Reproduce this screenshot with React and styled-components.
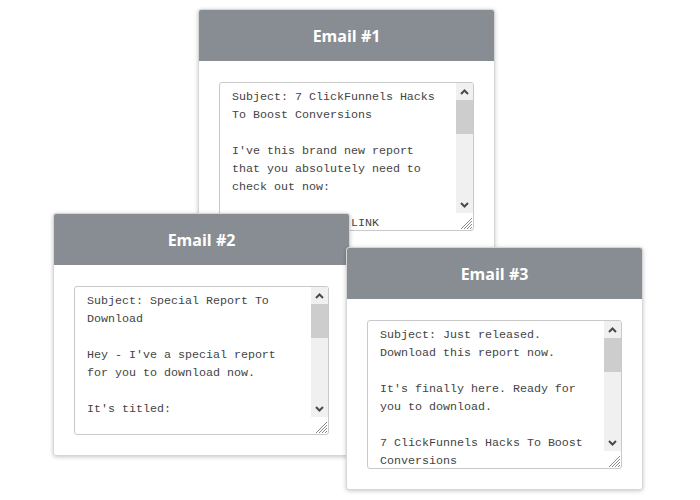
import React from "react";
import styled, { createGlobalStyle } from "styled-components";

const GlobalStyle = createGlobalStyle`
  html, body { margin: 0; padding: 0; background: #ffffff; }
  body { font-family: "Open Sans", "Liberation Sans", sans-serif; }
`;

const Canvas = styled.div`
  position: relative;
  width: 700px;
  height: 500px;
  overflow: hidden;
  background: #ffffff;
`;

const Card = styled.section`
  position: absolute;
  left: ${(p) => p.$x}px;
  top: ${(p) => p.$y}px;
  width: 297px;
  box-sizing: border-box;
  background: #ffffff;
  border: 1px solid #d6d6d6;
  border-radius: 3px;
  box-shadow: 0 1px 4px rgba(0, 0, 0, 0.22);
  overflow: hidden;
  display: flex;
  flex-direction: column;
`;

const Header = styled.h2`
  margin: 0;
  height: 51px;
  background: #878d93;
  color: #ffffff;
  font-family: "Open Sans", "Liberation Sans", sans-serif;
  font-weight: 700;
  font-size: 16px;
  display: flex;
  align-items: center;
  justify-content: center;
`;

const Body = styled.div`
  padding: 21px 20px 20px 20px;
  display: flex;
`;

const EmailBox = styled.div`
  position: relative;
  width: 255px;
  height: 149px;
  box-sizing: border-box;
  border: 1px solid #c9c9c9;
  border-radius: 3px;
  background: #ffffff;
  display: flex;
  overflow: hidden;
`;

const TextPane = styled.div`
  flex: 1;
  padding: 5px 0 0 12px;
  font-family: "Liberation Mono", "Courier New", monospace;
  font-size: 11.67px;
  line-height: 18px;
  color: #444444;
  white-space: pre;
  overflow: hidden;
`;

const ScrollColumn = styled.div`
  width: 17px;
  height: 130px;
  background: #f0f0f0;
  display: flex;
  flex-direction: column;
`;

const ArrowButton = styled.div`
  width: 17px;
  height: 17px;
  display: flex;
  align-items: center;
  justify-content: center;
`;

const Thumb = styled.div`
  height: 34px;
  background: #cdcdcd;
`;

const Spacer = styled.div`
  flex: 1;
`;

const Grip = styled.svg`
  position: absolute;
  right: 0;
  bottom: 0;
  width: 17px;
  height: 17px;
`;

const Chevron = ({ dir }) => (
  <svg width="9" height="6" viewBox="0 0 9 6">
    <polyline
      points={dir === "up" ? "1,5 4.5,1.5 8,5" : "1,1 4.5,4.5 8,1"}
      fill="none"
      stroke="#4a4a4a"
      strokeWidth="2"
    />
  </svg>
);

const EmailCard = ({ x, y, title, text }) => (
  <Card $x={x} $y={y}>
    <Header>{title}</Header>
    <Body>
      <EmailBox>
        <TextPane>{text}</TextPane>
        <ScrollColumn>
          <ArrowButton>
            <Chevron dir="up" />
          </ArrowButton>
          <Thumb />
          <Spacer />
          <ArrowButton>
            <Chevron dir="down" />
          </ArrowButton>
        </ScrollColumn>
        <Grip viewBox="0 0 17 17">
          <g stroke="#8a8a8a" strokeWidth="1">
            <line x1="16" y1="5" x2="5" y2="16" />
            <line x1="16" y1="8" x2="8" y2="16" />
            <line x1="16" y1="11" x2="11" y2="16" />
            <line x1="16" y1="14" x2="14" y2="16" />
          </g>
        </Grip>
      </EmailBox>
    </Body>
  </Card>
);

const emails = [
  {
    x: 198,
    y: 9,
    title: "Email #1",
    text:
      "Subject: 7 ClickFunnels Hacks\nTo Boost Conversions\n\nI've this brand new report\nthat you absolutely need to\ncheck out now:\n\nGet it here now: LINK",
  },
  {
    x: 53,
    y: 213,
    title: "Email #2",
    text:
      "Subject: Special Report To\nDownload\n\nHey - I've a special report\nfor you to download now.\n\nIt's titled:",
  },
  {
    x: 346,
    y: 247,
    title: "Email #3",
    text:
      "Subject: Just released.\nDownload this report now.\n\nIt's finally here. Ready for\nyou to download.\n\n7 ClickFunnels Hacks To Boost\nConversions",
  },
];

export default function App() {
  return (
    <>
      <GlobalStyle />
      <Canvas>
        {emails.map((e) => (
          <EmailCard key={e.title} {...e} />
        ))}
      </Canvas>
    </>
  );
}
